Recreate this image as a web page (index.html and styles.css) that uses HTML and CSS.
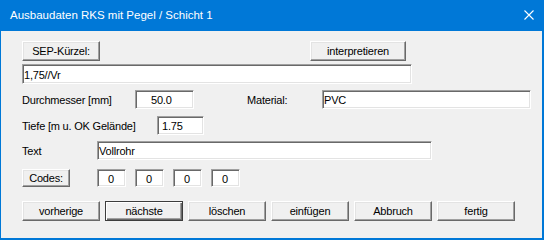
FILE: index.html
```html
<!DOCTYPE html>
<html lang="de">
<head>
    <meta charset="UTF-8">
    <meta name="viewport" content="width=device-width, initial-scale=1.0">
    <title>Ausbaudaten RKS mit Pegel / Schicht 1</title>
    <link rel="stylesheet" href="styles.css">
</head>
<body>
    <div class="dialog">
        <div class="title-bar">
            <span class="title-text">Ausbaudaten RKS mit Pegel / Schicht 1</span>
            <button class="close-btn" type="button" aria-label="Schließen">
                <svg width="10" height="10" viewBox="0 0 10 10">
                    <path d="M0.5 0.5 L9.5 9.5 M9.5 0.5 L0.5 9.5" stroke="#fff" stroke-width="1.1" fill="none"/>
                </svg>
            </button>
        </div>

        <div class="dialog-body">
            <div class="row row-sep">
                <button class="btn btn-sep" type="button">SEP-Kürzel:</button>
                <button class="btn btn-interp" type="button">interpretieren</button>
            </div>
            <div class="row row-code">
                <input class="field field-code" type="text" value="1,75//Vr">
            </div>

            <div class="row row-diameter">
                <label class="label label-diameter" for="diameter">Durchmesser [mm]</label>
                <input class="field field-diameter" id="diameter" type="text" value="50.0">
                <label class="label label-material" for="material">Material:</label>
                <input class="field field-material" id="material" type="text" value="PVC">
            </div>

            <div class="row row-depth">
                <label class="label label-depth" for="depth">Tiefe [m u. OK Gelände]</label>
                <input class="field field-depth" id="depth" type="text" value="1.75">
            </div>

            <div class="row row-text">
                <label class="label label-text" for="text">Text</label>
                <input class="field field-text" id="text" type="text" value="Vollrohr">
            </div>

            <div class="row row-codes">
                <button class="btn btn-codes" type="button">Codes:</button>
                <div class="codes">
                    <input class="field field-num" type="text" value="0">
                    <input class="field field-num" type="text" value="0">
                    <input class="field field-num" type="text" value="0">
                    <input class="field field-num" type="text" value="0">
                </div>
            </div>

            <div class="row row-actions">
                <button class="btn btn-action" type="button">vorherige</button>
                <button class="btn btn-action btn-default" type="button">nächste</button>
                <button class="btn btn-action" type="button">löschen</button>
                <button class="btn btn-action" type="button">einfügen</button>
                <button class="btn btn-action" type="button">Abbruch</button>
                <button class="btn btn-action" type="button">fertig</button>
            </div>
        </div>
    </div>
</body>
</html>
```

FILE: styles.css
```css
* {
    margin: 0;
    padding: 0;
    box-sizing: border-box;
}

body {
    font-family: "Liberation Sans", Arial, sans-serif;
    font-size: 11px;
    letter-spacing: -0.2px;
    color: #000;
    background: #f0f0f0;
}

.dialog {
    width: 544px;
    height: 240px;
    background: #f0f0f0;
    border-left: 1px solid #0078d7;
    border-right: 2px solid #0078d7;
    border-bottom: 2px solid #0078d7;
    display: flex;
    flex-direction: column;
}

.title-bar {
    height: 31px;
    background: #0078d7;
    color: #fff;
    display: flex;
    align-items: center;
    justify-content: space-between;
    padding: 0 8px 1px 9px;
}

.title-text {
    font-size: 11.5px;
    letter-spacing: 0;
}

.close-btn {
    background: none;
    border: none;
    width: 10px;
    height: 10px;
    display: flex;
}

.dialog-body {
    padding: 10px 0 0 21px;
}

.row {
    display: flex;
    align-items: center;
}

/* buttons */
.btn {
    font-family: inherit;
    font-size: 11px;
    letter-spacing: inherit;
    color: #000;
    background: #f0f0f0;
    height: 20px;
    border: 1px solid;
    border-color: #fff #696969 #696969 #fff;
    box-shadow: inset -1px -1px #a0a0a0, inset 1px 1px #e3e3e3;
}

.btn-sep {
    width: 78px;
}

.btn-interp {
    width: 96px;
    margin-left: 210px;
}

.btn-codes {
    width: 48px;
    height: 18px;
}

.btn-action {
    width: 78px;
}

.btn-default {
    border: 1px solid #3c3c3c;
    box-shadow: inset 1px 1px #fff, inset -1px -1px #696969, inset -2px -2px #a0a0a0;
}

/* text fields */
.field {
    font-family: inherit;
    font-size: 11px;
    letter-spacing: inherit;
    color: #000;
    background: #fff;
    height: 19px;
    border: 1px solid;
    border-color: #a0a0a0 #fff #fff #a0a0a0;
    box-shadow: inset 1px 1px #696969, inset -1px -1px #e3e3e3;
    padding: 1px 2px 0 1px;
    outline: none;
}

.row-code {
    margin-top: 3px;
}

.field-code {
    width: 390px;
    height: 20px;
}

.label {
    white-space: nowrap;
}

.row-diameter {
    margin-top: 6px;
}

.label-diameter {
    width: 113px;
}

.field-diameter {
    width: 59px;
    padding-left: 15px;
}

.label-material {
    width: 75px;
    margin-left: 53px;
}

.field-material {
    width: 209px;
}

.row-depth {
    margin-top: 7px;
}

.label-depth {
    width: 135px;
}

.field-depth {
    width: 47px;
    padding-left: 4px;
}

.row-text {
    margin-top: 6px;
}

.label-text {
    width: 75px;
}

.field-text {
    width: 335px;
}

.row-codes {
    margin-top: 9px;
}

.codes {
    display: flex;
    gap: 9px;
    margin-left: 27px;
}

.field-num {
    width: 29px;
    height: 18px;
    text-align: center;
}

.row-actions {
    margin-top: 14px;
    gap: 5px;
}
```
